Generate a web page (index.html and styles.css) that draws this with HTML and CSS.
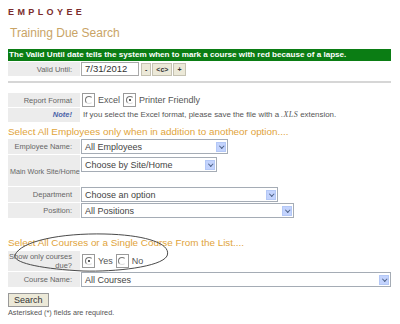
FILE: index.html
```html
<!DOCTYPE html>
<html lang="en">
<head>
    <meta charset="UTF-8">
    <title>Training Due Search</title>
    <link rel="stylesheet" href="styles.css">
</head>
<body>
    <div class="page">
        <div class="brand">EMPLOYEE</div>
        <h1 class="title">Training Due Search</h1>

        <div class="banner">The Valid Until date tells the system when to mark a course with red because of a lapse.</div>
        <div class="row">
            <div class="label">Valid Until:</div>
            <div class="field">
                <span class="textbox date">7/31/2012</span>
                <span class="btn small">-</span><span class="btn small">&lt;c&gt;</span><span class="btn small">+</span>
            </div>
        </div>

        <div class="rule"></div>

        <div class="row">
            <div class="label">Report Format</div>
            <div class="field">
                <span class="radio"><span class="dot"></span></span><span class="opt">Excel</span>
                <span class="radio"><span class="dot on"></span></span><span class="opt">Printer Friendly</span>
            </div>
        </div>
        <div class="row note-row">
            <div class="label"><em class="note">Note!</em></div>
            <div class="field note-text">If you select the Excel format, please save the file with a <span class="mono">.XLS</span> extension.</div>
        </div>

        <h2 class="section">Select All Employees only when in addition to anotheor option....</h2>
        <div class="row">
            <div class="label">Employee Name:</div>
            <div class="field"><div class="select w-emp"><span>All Employees</span><i class="arrow"></i></div></div>
        </div>
        <div class="row tall">
            <div class="label mid">Main Work Site/Home</div>
            <div class="field top"><div class="select w-site"><span>Choose by Site/Home</span><i class="arrow"></i></div></div>
        </div>
        <div class="row">
            <div class="label">Department</div>
            <div class="field"><div class="select w-dept"><span>Choose an option</span><i class="arrow"></i></div></div>
        </div>
        <div class="row">
            <div class="label">Position:</div>
            <div class="field"><div class="select w-pos"><span>All Positions</span><i class="arrow"></i></div></div>
        </div>

        <div class="courses">
            <h2 class="section">Select All Courses or a Single Course From the List....</h2>
            <div class="row double">
                <div class="label">Show only courses<br>due?</div>
                <div class="field">
                    <span class="radio"><span class="dot on"></span></span><span class="opt">Yes</span>
                    <span class="radio"><span class="dot"></span></span><span class="opt">No</span>
                </div>
            </div>
            <svg class="circle" width="164" height="48" viewBox="0 0 164 48">
                <path d="M4 28 C 10 14, 50 6, 94 7 C 136 8, 161 17, 156 29 C 150 40, 104 45, 72 44 C 32 42, 1 36, 4 28" fill="none" stroke="#4a4a4a" stroke-width="1"/>
            </svg>
        </div>
        <div class="row">
            <div class="label">Course Name:</div>
            <div class="field"><div class="select w-course"><span>All Courses</span><i class="arrow"></i></div></div>
        </div>

        <div class="search"><span class="btn search-btn">Search</span></div>
        <p class="foot">Asterisked (*) fields are required.</p>
    </div>
</body>
</html>
```

FILE: styles.css
```css
body {
    margin: 0;
    background: #fff;
    font-family: "Liberation Sans", Arial, sans-serif;
    color: #555;
}
.page {
    padding: 8px 9px 0 8px;
}
.brand {
    font-size: 9px;
    font-weight: bold;
    letter-spacing: 3.4px;
    color: #7a2c2c;
    line-height: 8px;
}
.title {
    margin: 10px 0 0 2px;
    font-size: 12px;
    font-weight: normal;
    color: #c9a466;
    line-height: 14px;
}
.banner {
    margin-top: 9px;
    background: #0b7d14;
    color: #fff;
    font-size: 8.1px;
    font-weight: bold;
    line-height: 12px;
    padding-left: 1px;
    white-space: nowrap;
}
.row {
    display: flex;
    margin-top: 1px;
    min-height: 14px;
}
.label {
    width: 64px;
    flex: none;
    background: #ececec;
    font-size: 7.5px;
    text-align: right;
    padding: 3px 8px 0 0;
    color: #666;
    line-height: 9px;
    white-space: nowrap;
}
.label.mid {
    padding: 12px 0 0 2px;
    width: 70px;
    font-size: 7.2px;
    text-align: left;
}
.field {
    flex: 1;
    display: flex;
    align-items: center;
    padding-left: 1px;
    font-size: 9px;
}
.field.top {
    align-items: flex-start;
    padding-top: 2px;
}
.textbox {
    display: inline-block;
    border: 1px solid #a9a9a9;
    height: 12px;
    line-height: 12px;
    padding-left: 3px;
    font-size: 9.5px;
    color: #333;
    background: #fff;
}
.date {
    width: 53px;
    margin-right: 2px;
}
.btn {
    display: inline-block;
    background: #ece9d8;
    border: 1px solid #c5c2b2;
    color: #333;
    text-align: center;
}
.btn.small {
    font-size: 7px;
    font-weight: bold;
    height: 11px;
    line-height: 11px;
    padding: 0 3px;
    margin-right: 1px;
}
.rule {
    height: 2px;
    background: #d6d6d6;
    margin: 5px 0 10px;
}
.radio {
    display: inline-flex;
    align-items: center;
    justify-content: center;
    width: 11px;
    height: 12px;
    border: 1px solid #9a9a9a;
    background: #fff;
    margin-left: 1px;
}
.dot {
    width: 6px;
    height: 6px;
    border-radius: 50%;
    border: 1px solid #777;
    border-right-color: transparent;
    border-bottom-color: #ddd;
    position: relative;
}
.dot.on::after {
    content: "";
    position: absolute;
    left: 2px;
    top: 2px;
    width: 2px;
    height: 2px;
    background: #222;
    border-radius: 50%;
}
.opt {
    font-size: 9px;
    color: #555;
    margin: 0 2px 0 3px;
}
.note-row .label {
    padding-top: 2px;
}
.note {
    color: #4a63a8;
    font-weight: bold;
    font-size: 7.5px;
}
.note-text {
    font-size: 7.9px;
    color: #555;
    align-items: flex-start;
    padding-top: 2px;
    padding-left: 3px;
    white-space: nowrap;
}
.mono {
    font-family: "Liberation Serif", serif;
    font-style: italic;
    letter-spacing: 0.5px;
    margin: 0 2px;
}
.section {
    margin: 4px 0 2px 0;
    font-size: 9.9px;
    font-weight: normal;
    color: #e1a43a;
    line-height: 11px;
    white-space: nowrap;
}
.select {
    display: flex;
    align-items: center;
    height: 13px;
    border: 1px solid #a5acb5;
    background: #fff;
    font-size: 9px;
    color: #444;
}
.select span {
    flex: 1;
    padding-left: 3px;
}
.arrow {
    width: 10px;
    height: 10px;
    margin-right: 1px;
    background: #c3d3fd;
    border: 1px solid #b4c8f6;
    box-sizing: border-box;
    position: relative;
}
.arrow::after {
    content: "";
    position: absolute;
    left: 2.5px;
    top: 1.5px;
    width: 2.5px;
    height: 2.5px;
    border-right: 1.2px solid #4d6185;
    border-bottom: 1.2px solid #4d6185;
    transform: rotate(45deg);
}
.w-emp { width: 145px; }
.w-site { width: 134px; }
.w-dept { width: 195px; }
.w-pos { width: 211px; }
.w-course { width: 308px; }
.row.tall { min-height: 31px; }
.courses {
    position: relative;
    margin-top: 19px;
}
.courses .section {
    margin-bottom: 3px;
}
.row.double .label {
    padding-top: 1px;
    height: 19px;
}
.circle {
    position: absolute;
    left: 3px;
    top: -10px;
}
.search {
    margin-top: 2px;
}
.search-btn {
    font-size: 9px;
    color: #333;
    padding: 0 5px;
    height: 12px;
    line-height: 12px;
    border: 1px solid #999;
}
.foot {
    margin: 1px 0 0 0;
    font-size: 7.3px;
    color: #555;
}
```
